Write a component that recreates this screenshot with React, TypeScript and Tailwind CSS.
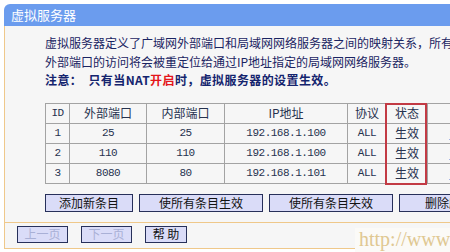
import React from 'react';

const rows = [
  { id: 1, ext: '25', inner: '25', ip: '192.168.1.100' },
  { id: 2, ext: '110', inner: '110', ip: '192.168.1.100' },
  { id: 3, ext: '8080', inner: '80', ip: '192.168.1.101' },
];

const cell = 'h-[20px] p-0 border border-[#a3a3a3] text-center align-middle';
const mono = "[font-family:'Liberation_Mono',monospace] text-[11px] tracking-[-0.5px]";

const Btn = ({ label, w, disabled }: { label: string; w: string; disabled?: boolean }) => (
  <button
    className={`${w} shrink-0 border border-[#27305a] bg-[#dadcf8] leading-none ${
      disabled ? 'text-[#a9b0d6]' : 'text-[#111]'
    }`}
  >
    {label}
  </button>
);

export default function App() {
  return (
    <div className="relative w-[450px] h-[252px] overflow-hidden bg-white pt-[4px] pl-[4px] text-[12px] [font-family:'Noto_Sans_CJK_SC',sans-serif]">
      <div className="w-[600px] h-[22px] rounded-tl-[6px] bg-[#6b9cee] pl-[7px] text-[13px] leading-[22px] text-white">
        虚拟服务器
      </div>

      <div className="w-[600px] border-l border-[#efc88a] bg-[#f6f6f6]">
        <div className="pl-[40px] pt-[8px] leading-[18.5px] whitespace-nowrap text-[#1a2462]">
          <p>虚拟服务器定义了广域网外部端口和局域网网络服务器之间的映射关系，所有</p>
          <p>外部端口的访问将会被重定位给通过IP地址指定的局域网网络服务器。</p>
          <p className="font-bold tracking-[0.4px] text-[#14246e]">
            注意：&nbsp;&nbsp;只有当NAT<span className="text-[#e4151a]">开启</span>时，虚拟服务器的设置生效。
          </p>
        </div>

        <div className="pl-[40px] mt-[13px]">
          <div className="relative w-fit">
            <table className="table-fixed border-collapse text-[#26324f]">
              <colgroup>
                <col className="w-[24px]" />
                <col className="w-[77px]" />
                <col className="w-[78px]" />
                <col className="w-[123px]" />
                <col className="w-[39px]" />
                <col className="w-[41px]" />
                <col className="w-[95px]" />
              </colgroup>
              <thead>
                <tr>
                  <th className={`${cell} font-normal ${mono}`}>ID</th>
                  <th className={`${cell} font-normal`}>外部端口</th>
                  <th className={`${cell} font-normal`}>内部端口</th>
                  <th className={`${cell} font-normal`}>IP地址</th>
                  <th className={`${cell} font-normal`}>协议</th>
                  <th className={`${cell} font-normal`}>状态</th>
                  <th className={`${cell} font-normal`}>配置</th>
                </tr>
              </thead>
              <tbody>
                {rows.map((r) => (
                  <tr key={r.id}>
                    <td className={`${cell} ${mono}`}>{r.id}</td>
                    <td className={`${cell} ${mono}`}>{r.ext}</td>
                    <td className={`${cell} ${mono}`}>{r.inner}</td>
                    <td className={`${cell} ${mono}`}>{r.ip}</td>
                    <td className={`${cell} ${mono}`}>ALL</td>
                    <td className={cell}>生效</td>
                    <td className={`${cell} text-[#1a3cc8]`}>
                      <span className="underline">编辑</span> <span className="underline">删除</span>
                    </td>
                  </tr>
                ))}
              </tbody>
            </table>
            {/* red annotation box round the status column */}
            <div className="absolute top-0 left-[340px] w-[42px] h-[82px] border-2 border-[#c23a44]" />
          </div>
        </div>

        <div className="flex items-start gap-[6px] pl-[40px] pt-[10px] pb-[10px]">
          <Btn label="添加新条目" w="w-[88px] h-[18px]" />
          <Btn label="使所有条目生效" w="w-[124px] h-[18px]" />
          <Btn label="使所有条目失效" w="w-[124px] h-[18px]" />
          <Btn label="删除所有条目" w="w-[124px] h-[18px]" />
        </div>

        <div className="flex items-start gap-[13px] h-[27px] border-y border-[#efc88a] pt-[3px] pl-[12px]">
          <Btn label="上一页" w="w-[51px] h-[17px]" disabled />
          <Btn label="下一页" w="w-[51px] h-[17px]" disabled />
          <Btn label="帮 助" w="w-[42px] h-[17px]" />
        </div>
      </div>

      <div className="absolute left-[355px] top-[228px] w-[95px] h-[24px] bg-[#fbfaf7] pl-[4px] text-[20px] leading-[22px] text-[#e0c892] [font-family:'Liberation_Serif',serif]">
        http://www
      </div>
    </div>
  );
}
